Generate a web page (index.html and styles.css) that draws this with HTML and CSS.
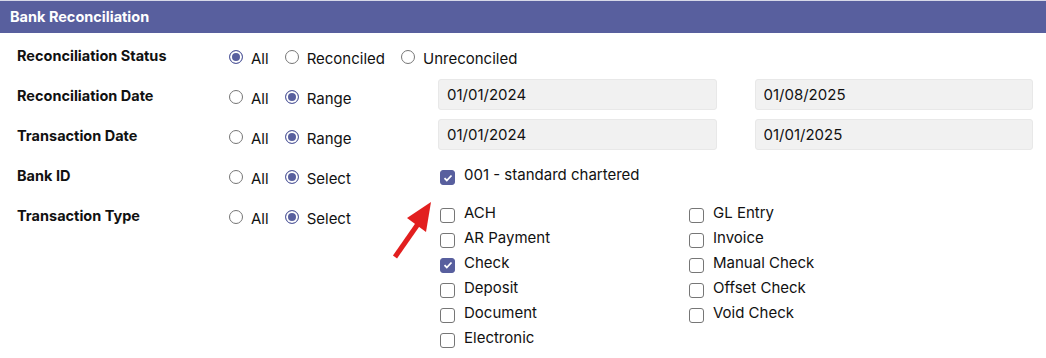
FILE: index.html
```html
<!doctype html>
<html>
    <head>
        <meta charset="utf-8">
        <title>Bank Reconciliation</title>
        <link rel="stylesheet" href="styles.css">
    </head>
    <body>
        <section class="panel">
            <header class="panel-title">Bank Reconciliation</header>
            <form class="filters">
                <div class="row">
                    <label class="row-label">Reconciliation Status</label>
                    <div class="options">
                        <label class="opt"><input type="radio" name="status" checked><span>All</span></label>
                        <label class="opt"><input type="radio" name="status"><span>Reconciled</span></label>
                        <label class="opt"><input type="radio" name="status"><span>Unreconciled</span></label>
                    </div>
                </div>
                <div class="row">
                    <label class="row-label">Reconciliation Date</label>
                    <div class="options narrow">
                        <label class="opt"><input type="radio" name="rdate"><span>All</span></label>
                        <label class="opt"><input type="radio" name="rdate" checked><span>Range</span></label>
                    </div>
                    <div class="dates">
                        <input class="date" type="text" value="01/01/2024">
                        <input class="date" type="text" value="01/08/2025">
                    </div>
                </div>
                <div class="row">
                    <label class="row-label">Transaction Date</label>
                    <div class="options narrow">
                        <label class="opt"><input type="radio" name="tdate"><span>All</span></label>
                        <label class="opt"><input type="radio" name="tdate" checked><span>Range</span></label>
                    </div>
                    <div class="dates">
                        <input class="date" type="text" value="01/01/2024">
                        <input class="date" type="text" value="01/01/2025">
                    </div>
                </div>
                <div class="row">
                    <label class="row-label">Bank ID</label>
                    <div class="options narrow">
                        <label class="opt"><input type="radio" name="bank"><span>All</span></label>
                        <label class="opt"><input type="radio" name="bank" checked><span>Select</span></label>
                    </div>
                    <div class="checks single">
                        <label class="chk"><input type="checkbox" checked><span>001 - standard chartered</span></label>
                    </div>
                </div>
                <div class="row">
                    <label class="row-label">Transaction Type</label>
                    <div class="options narrow">
                        <label class="opt"><input type="radio" name="ttype"><span>All</span></label>
                        <label class="opt"><input type="radio" name="ttype" checked><span>Select</span></label>
                    </div>
                    <div class="checks grid">
                        <label class="chk"><input type="checkbox"><span>ACH</span></label>
                        <label class="chk"><input type="checkbox"><span>AR Payment</span></label>
                        <label class="chk"><input type="checkbox" checked><span>Check</span></label>
                        <label class="chk"><input type="checkbox"><span>Deposit</span></label>
                        <label class="chk"><input type="checkbox"><span>Document</span></label>
                        <label class="chk"><input type="checkbox"><span>Electronic</span></label>
                        <label class="chk"><input type="checkbox"><span>GL Entry</span></label>
                        <label class="chk"><input type="checkbox"><span>Invoice</span></label>
                        <label class="chk"><input type="checkbox"><span>Manual Check</span></label>
                        <label class="chk"><input type="checkbox"><span>Offset Check</span></label>
                        <label class="chk"><input type="checkbox"><span>Void Check</span></label>
                    </div>
                </div>
            </form>
            <svg class="pointer" width="60" height="70" viewBox="0 0 60 70">
                <line x1="7" y1="63" x2="30" y2="30" stroke="#e21f1f" stroke-width="5"/>
                <polygon points="43,8 19,24 38,38" fill="#e21f1f"/>
            </svg>
        </section>
    </body>
</html>
```

FILE: styles.css
```css
* {
    box-sizing: border-box;
    font-family: "Inter", "Open Sans", sans-serif;
}

html,
body {
    margin: 0;
    background-color: #fff;
    color: #111;
}

.panel {
    position: relative;
    width: 1046px;
    height: 358px;
    overflow: hidden;
}

.panel-title {
    height: 33px;
    border-top: 1px solid #d6d8e8;
    background-color: #585f9e;
    color: #fff;
    font-size: 14.5px;
    font-weight: 700;
    padding: 7px 10px;
}

.filters {
    padding: 4px 13px 0 17px;
}

.row {
    display: flex;
    align-items: flex-start;
    min-height: 40px;
}

.row-label {
    width: 212px;
    flex: none;
    font-size: 14.5px;
    font-weight: 700;
    line-height: 20px;
    padding-top: 9px;
}

.options {
    display: flex;
    width: 209px;
    flex: none;
    gap: 16px;
    padding-top: 12px;
}

.opt {
    display: flex;
    align-items: center;
    gap: 8px;
    font-size: 15px;
    line-height: 20px;
}

.opt input {
    appearance: none;
    margin: 0 0 5px 0;
    width: 14px;
    height: 14px;
    border: 1px solid #767676;
    border-radius: 50%;
    background-color: #fff;
}

.opt input:checked {
    border-color: #585f9e;
    box-shadow: inset 0 0 0 2px #fff;
    background-color: #585f9e;
}

.dates {
    display: flex;
    flex: 1;
    gap: 38px;
    padding-top: 2px;
}

.date {
    flex: 1;
    height: 31px;
    border: 1px solid #e8e8e8;
    border-radius: 3px;
    background-color: #f1f1f1;
    padding: 0 8px;
    font-size: 15px;
    color: #111;
}

.checks {
    padding-left: 2px;
}

.checks.single {
    padding-top: 8px;
}

.checks.grid {
    display: grid;
    grid-template-rows: repeat(6, 25px);
    grid-template-columns: 249px 200px;
    grid-auto-flow: column;
    padding-top: 3px;
}

.chk {
    display: flex;
    align-items: center;
    gap: 9px;
    font-size: 15px;
    line-height: 20px;
}

.chk input {
    appearance: none;
    margin: 5px 0 0 0;
    width: 15px;
    height: 15px;
    border: 1.5px solid #767676;
    border-radius: 3px;
    background-color: #fff;
}

.chk input:checked {
    border-color: #585f9e;
    background: #585f9e url("data:image/svg+xml,%3Csvg xmlns='http://www.w3.org/2000/svg' viewBox='0 0 12 12'%3E%3Cpath d='M2.5 6.2l2.3 2.3 4.7-5' fill='none' stroke='%23fff' stroke-width='1.8'/%3E%3C/svg%3E") center / 12px no-repeat;
}

.pointer {
    position: absolute;
    left: 388px;
    top: 194px;
}
```
